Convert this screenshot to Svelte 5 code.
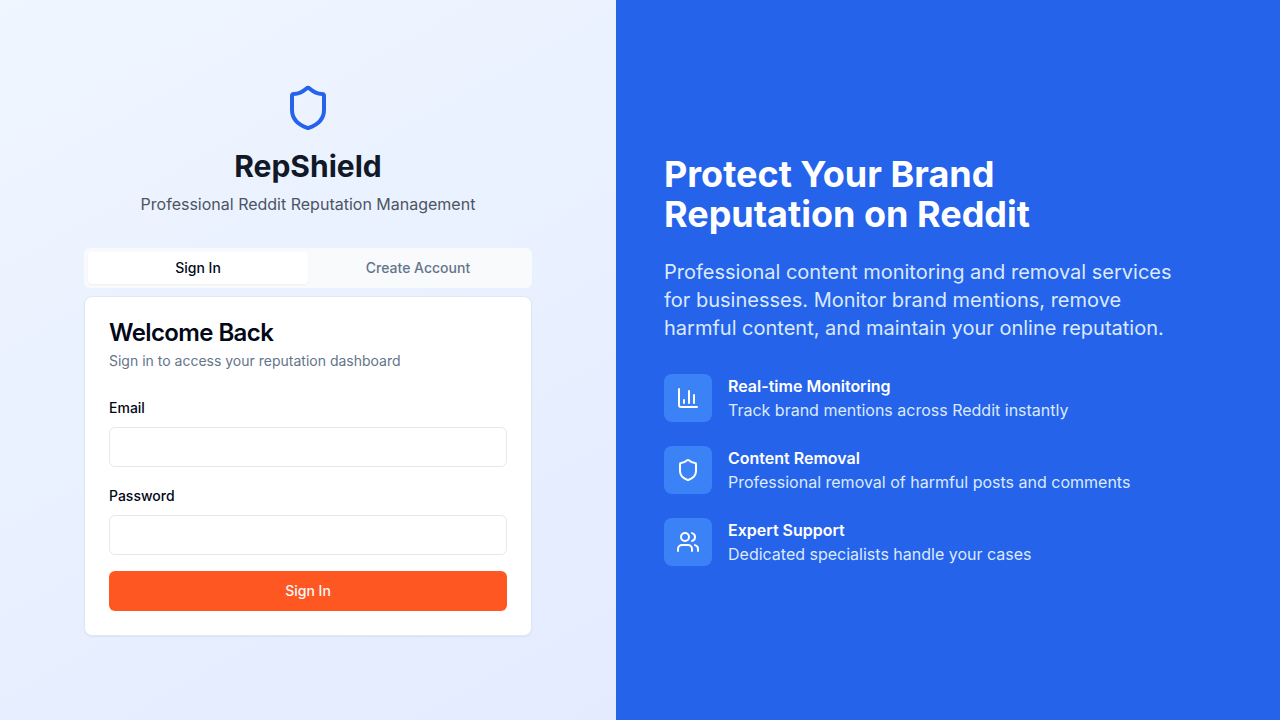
<script>
  let tab = $state('signin');
  let email = $state('');
  let password = $state('');

  const features = [
    {
      title: 'Real-time Monitoring',
      text: 'Track brand mentions across Reddit instantly',
      paths: ['M3 3v16a2 2 0 0 0 2 2h16', 'M18 17V9', 'M13 17V5', 'M8 17v-3']
    },
    {
      title: 'Content Removal',
      text: 'Professional removal of harmful posts and comments',
      paths: [
        'M20 13c0 5-3.5 7.5-7.66 8.95a1 1 0 0 1-.67-.01C7.5 20.5 4 18 4 13V6a1 1 0 0 1 1-1c2 0 4.5-1.2 6.24-2.72a1.17 1.17 0 0 1 1.52 0C14.51 3.81 17 5 19 5a1 1 0 0 1 1 1z'
      ]
    },
    {
      title: 'Expert Support',
      text: 'Dedicated specialists handle your cases',
      paths: [
        'M16 21v-2a4 4 0 0 0-4-4H6a4 4 0 0 0-4 4v2',
        'M5 7a4 4 0 1 0 8 0a4 4 0 1 0-8 0',
        'M22 21v-2a4 4 0 0 0-3-3.87',
        'M16 3.13a4 4 0 0 1 0 7.75'
      ]
    }
  ];
</script>

{#snippet icon(paths)}
  <svg viewBox="0 0 24 24" aria-hidden="true">
    {#each paths as d}
      <path {d} />
    {/each}
  </svg>
{/snippet}

<div class="page">
  <main class="auth">
    <div class="column">
      <header class="brand">
        <div class="logo">{@render icon(features[1].paths)}</div>
        <h1>RepShield</h1>
        <p>Professional Reddit Reputation Management</p>
      </header>

      <div class="tabs" role="tablist">
        <button type="button" role="tab" aria-selected={tab === 'signin'} onclick={() => (tab = 'signin')}>Sign In</button>
        <button type="button" role="tab" aria-selected={tab === 'create'} onclick={() => (tab = 'create')}>Create Account</button>
      </div>

      <section class="card">
        <h2>Welcome Back</h2>
        <p class="hint">Sign in to access your reputation dashboard</p>
        <form onsubmit={(e) => e.preventDefault()}>
          <div class="field">
            <label for="email">Email</label>
            <input id="email" type="email" bind:value={email} />
          </div>
          <div class="field">
            <label for="password">Password</label>
            <input id="password" type="password" bind:value={password} />
          </div>
          <button class="submit" type="submit">Sign In</button>
        </form>
      </section>
    </div>
  </main>

  <aside class="promo">
    <div class="pitch">
      <h2>Protect Your Brand Reputation on Reddit</h2>
      <p class="lead">
        Professional content monitoring and removal services for businesses. Monitor brand mentions,
        remove harmful content, and maintain your online reputation.
      </p>
      <ul>
        {#each features as feature}
          <li>
            <div class="tile">{@render icon(feature.paths)}</div>
            <div>
              <h3>{feature.title}</h3>
              <p>{feature.text}</p>
            </div>
          </li>
        {/each}
      </ul>
    </div>
  </aside>
</div>

<style>
  :global(body) {
    margin: 0;
    background: #fff;
    font-family: Inter, sans-serif;
    font-size: 16px;
    line-height: 24px;
    color: #020817;
  }

  :global(*) {
    box-sizing: border-box;
  }

  h1, h2, h3, p, ul {
    margin: 0;
    padding: 0;
  }

  button, input {
    font: inherit;
    color: inherit;
  }

  button {
    border: 0;
    cursor: pointer;
  }

  svg {
    display: block;
    width: 24px;
    height: 24px;
    fill: none;
    stroke: currentColor;
    stroke-width: 2;
    stroke-linecap: round;
    stroke-linejoin: round;
  }

  .page {
    display: flex;
    min-height: 100vh;
    background: linear-gradient(to bottom right, #eff6ff, #e0e7ff);
  }

  .auth {
    flex: 0 1 616px;
    display: flex;
    align-items: center;
    justify-content: center;
    padding: 48px;
  }

  .column {
    width: 100%;
    max-width: 448px;
  }

  .brand {
    margin-bottom: 32px;
    text-align: center;
  }

  .logo {
    display: flex;
    justify-content: center;
    margin-bottom: 16px;
    color: #2563eb;
  }

  .logo :global(svg) {
    width: 48px;
    height: 48px;
  }

  h1 {
    font-size: 30px;
    line-height: 36px;
    font-weight: 700;
    color: #111827;
  }

  .brand p {
    margin-top: 8px;
    color: #4b5563;
  }

  .tabs {
    display: grid;
    grid-template-columns: 1fr 1fr;
    padding: 4px;
    margin-bottom: 8px;
    border-radius: 6px;
    background: #f8fafc;
  }

  .tabs button {
    padding: 6px 12px;
    border-radius: 4px;
    background: transparent;
    font-size: 14px;
    line-height: 20px;
    font-weight: 500;
    color: #64748b;
  }

  .tabs button[aria-selected='true'] {
    background: #fff;
    color: #020817;
    box-shadow: 0 1px 2px rgb(0 0 0 / 5%);
  }

  .card {
    padding: 24px;
    border: 1px solid #e2e8f0;
    border-radius: 8px;
    background: #fff;
    box-shadow: 0 1px 2px rgb(0 0 0 / 5%);
  }

  .card h2 {
    font-size: 24px;
    line-height: 24px;
    font-weight: 600;
    letter-spacing: -0.025em;
  }

  .hint {
    margin: 6px 0 24px;
    font-size: 14px;
    line-height: 20px;
    color: #64748b;
  }

  form {
    display: grid;
    gap: 16px;
  }

  .field label {
    font-size: 14px;
    line-height: 14px;
    font-weight: 500;
  }

  .field input {
    display: block;
    width: 100%;
    height: 40px;
    margin-top: 8px;
    padding: 8px 12px;
    border: 1px solid #e2e8f0;
    border-radius: 6px;
    background: #fff;
    font-size: 14px;
  }

  .submit {
    height: 40px;
    border-radius: 6px;
    background: #ff5722;
    color: #f8fafc;
    font-size: 14px;
    line-height: 20px;
    font-weight: 500;
  }

  .promo {
    flex: 1 1 664px;
    display: flex;
    align-items: center;
    padding: 48px;
    background: #2563eb;
    color: #fff;
  }

  .pitch {
    max-width: 512px;
  }

  .pitch h2 {
    margin-bottom: 24px;
    font-size: 36px;
    line-height: 40px;
    font-weight: 700;
  }

  .pitch p {
    color: #dbeafe;
  }

  .pitch .lead {
    margin-bottom: 32px;
    font-size: 20px;
    line-height: 28px;
  }

  ul {
    display: grid;
    gap: 24px;
    list-style: none;
  }

  li {
    display: flex;
    align-items: center;
    gap: 16px;
  }

  .tile {
    padding: 12px;
    border-radius: 8px;
    background: #3b82f6;
  }

  h3 {
    font-size: 16px;
    line-height: 24px;
    font-weight: 600;
  }
</style>
